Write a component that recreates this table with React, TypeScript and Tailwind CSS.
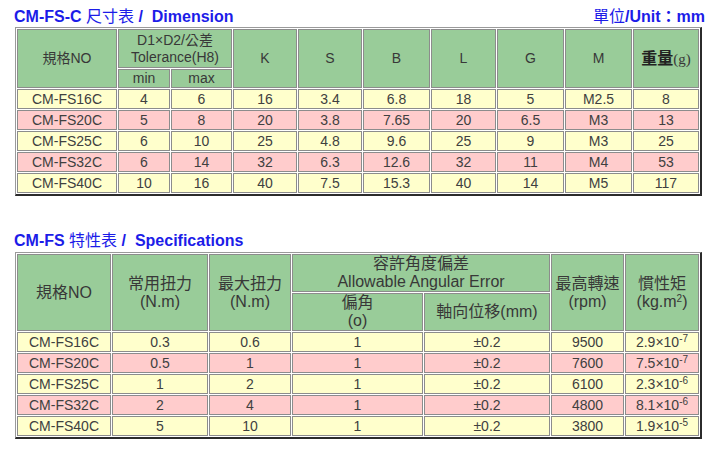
const font = { fontFamily: '"Liberation Sans", Arial, "Noto Sans CJK TC", sans-serif' };

const dims = [
  ["CM-FS16C", "4", "6", "16", "3.4", "6.8", "18", "5", "M2.5", "8"],
  ["CM-FS20C", "5", "8", "20", "3.8", "7.65", "20", "6.5", "M3", "13"],
  ["CM-FS25C", "6", "10", "25", "4.8", "9.6", "25", "9", "M3", "25"],
  ["CM-FS32C", "6", "14", "32", "6.3", "12.6", "32", "11", "M4", "53"],
  ["CM-FS40C", "10", "16", "40", "7.5", "15.3", "40", "14", "M5", "117"],
];

const specs = [
  ["CM-FS16C", "0.3", "0.6", "1", "±0.2", "9500", "2.9", "-7"],
  ["CM-FS20C", "0.5", "1", "1", "±0.2", "7600", "7.5", "-7"],
  ["CM-FS25C", "1", "2", "1", "±0.2", "6100", "2.3", "-6"],
  ["CM-FS32C", "2", "4", "1", "±0.2", "4800", "8.1", "-6"],
  ["CM-FS40C", "5", "10", "1", "±0.2", "3800", "1.9", "-5"],
];

const th = "border border-[#8c8c8c] bg-[#99cc99] p-0 text-center font-normal text-[#383838] leading-[17px]";
const th2 = "border border-[#8c8c8c] bg-[#99cc99] p-0 text-center font-normal text-[#383838] text-[16px] leading-[18px]";
const td = "border border-[#8c8c8c] p-0 text-center text-[14px] text-[#404040] h-[20px] leading-[18px]";
const tableCls =
  "w-[687px] table-fixed border-separate border-spacing-[1px] border-t border-l border-r-2 border-b-2 border-t-[#9a9a9a] border-l-[#9a9a9a] border-r-[#2b2b2b] border-b-[#2b2b2b]";

function rowBg(i: number) {
  return i % 2 === 0 ? "bg-[#ffffcc]" : "bg-[#ffcccc]";
}

export default function App() {
  return (
    <div className="w-[720px] h-[450px] bg-white pl-[15px]" style={font}>
      <div className="flex w-[688px] h-[27px] items-end justify-between pb-[1px] text-[16px] font-bold text-[#1c1ce8] leading-[18px]">
        <div className="-ml-[1px]">
          CM-FS-C <span className="font-normal">尺寸表</span> /&nbsp; Dimension
        </div>
        <div className="mr-[-2px]">
          <span className="font-normal">單位</span>/Unit：mm
        </div>
      </div>

      <table className={tableCls}>
        <colgroup>
          <col className="w-[100px]" />
          <col className="w-[52px]" />
          <col className="w-[61px]" />
          <col className="w-[64px]" />
          <col className="w-[64px]" />
          <col className="w-[67px]" />
          <col className="w-[65px]" />
          <col className="w-[67px]" />
          <col className="w-[67px]" />
          <col />
        </colgroup>
        <thead>
          <tr>
            <th rowSpan={2} className={`${th} text-[14px]`}>規格NO</th>
            <th colSpan={2} className={`${th} text-[14px] h-[39px]`}>
              D1×D2/公差
              <br />
              Tolerance(H8)
            </th>
            <th rowSpan={2} className={`${th} text-[14px]`}>K</th>
            <th rowSpan={2} className={`${th} text-[14px]`}>S</th>
            <th rowSpan={2} className={`${th} text-[14px]`}>B</th>
            <th rowSpan={2} className={`${th} text-[14px]`}>L</th>
            <th rowSpan={2} className={`${th} text-[14px]`}>G</th>
            <th rowSpan={2} className={`${th} text-[14px]`}>M</th>
            <th rowSpan={2} className={`${th} text-[16px]`}>
              <span className="font-bold text-[#222]">重量</span>
              <span className="text-[15px]" style={{ fontFamily: '"Liberation Serif", serif' }}>(g)</span>
            </th>
          </tr>
          <tr>
            <th className={`${th} text-[14px] h-[19px]`}>min</th>
            <th className={`${th} text-[14px] h-[19px]`}>max</th>
          </tr>
        </thead>
        <tbody>
          {dims.map((r, i) => (
            <tr key={r[0]} className={rowBg(i)}>
              {r.map((c, j) => (
                <td key={j} className={td}>{c}</td>
              ))}
            </tr>
          ))}
        </tbody>
      </table>

      <div className="flex h-[56px] items-end pb-[2px] text-[16px] font-bold text-[#1c1ce8] leading-[18px]">
        <div className="-ml-[1px]">
          CM-FS <span className="font-normal">特性表</span> /&nbsp; Specifications
        </div>
      </div>

      <table className={tableCls}>
        <colgroup>
          <col className="w-[94px]" />
          <col className="w-[96px]" />
          <col className="w-[82px]" />
          <col className="w-[131px]" />
          <col className="w-[126px]" />
          <col className="w-[73px]" />
          <col />
        </colgroup>
        <thead>
          <tr>
            <th rowSpan={2} className={th2}>規格NO</th>
            <th rowSpan={2} className={th2}>
              常用扭力
              <br />
              (N.m)
            </th>
            <th rowSpan={2} className={th2}>
              最大扭力
              <br />
              (N.m)
            </th>
            <th colSpan={2} className={`${th2} h-[38px]`}>
              容許角度偏差
              <br />
              Allowable Angular Error
            </th>
            <th rowSpan={2} className={th2}>
              最高轉速
              <br />
              (rpm)
            </th>
            <th rowSpan={2} className={th2}>
              慣性矩
              <br />
              (kg.m<sup className="text-[10px]">2</sup>)
            </th>
          </tr>
          <tr>
            <th className={`${th2} h-[37px]`}>
              偏角
              <br />
              (o)
            </th>
            <th className={`${th2} h-[37px]`}>軸向位移(mm)</th>
          </tr>
        </thead>
        <tbody>
          {specs.map((r, i) => (
            <tr key={r[0]} className={rowBg(i)}>
              {r.slice(0, 6).map((c, j) => (
                <td key={j} className={td}>{c}</td>
              ))}
              <td className={td}>
                {r[6]}×10<sup className="text-[10px]">{r[7]}</sup>
              </td>
            </tr>
          ))}
        </tbody>
      </table>
    </div>
  );
}
